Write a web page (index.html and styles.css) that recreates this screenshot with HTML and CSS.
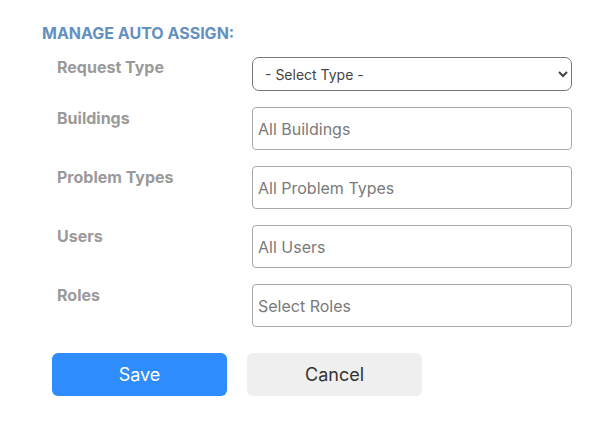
FILE: index.html
```html
<!DOCTYPE html>
<html lang="en">
<head>
  <meta charset="UTF-8" />
  <title>Manage Auto Assign</title>
  <meta name="viewport" content="width=device-width, initial-scale=1.0" />
  <link rel="stylesheet" href="styles.css">
</head>
<body>
  <div class="panel">
    <h3 class="title">MANAGE AUTO ASSIGN:</h3>

    <div class="row row-select">
      <label for="requestType">Request Type</label>
      <select id="requestType" class="field select">
        <option>- Select Type -</option>
      </select>
    </div>

    <div class="row">
      <label for="buildings">Buildings</label>
      <input type="text" id="buildings" class="field" placeholder="All Buildings">
    </div>

    <div class="row">
      <label for="problemTypes">Problem Types</label>
      <input type="text" id="problemTypes" class="field" placeholder="All Problem Types">
    </div>

    <div class="row">
      <label for="users">Users</label>
      <input type="text" id="users" class="field" placeholder="All Users">
    </div>

    <div class="row">
      <label for="roles">Roles</label>
      <input type="text" id="roles" class="field" placeholder="Select Roles">
    </div>

    <div class="actions">
      <button class="btn btn-save">Save</button>
      <button class="btn btn-cancel">Cancel</button>
    </div>
  </div>
</body>
</html>
```

FILE: styles.css
```css
body { margin: 0; background: #fff; font-family: Inter, "Noto Sans", Arial, sans-serif; }
.panel { padding: 24px 0 0 42px; width: 530px; }
.title { margin: 0 0 15px; font-size: 16px; line-height: 18px; font-weight: 700; color: #6490c0; }
.row { display: flex; align-items: flex-start; margin-bottom: 16px; }
.row label { width: 195px; margin-left: 15px; padding-top: 2px; font-size: 16px; line-height: 18px; font-weight: 700; color: #9a9a9a; }
.row-select label { padding-top: 1px; }
.field { box-sizing: border-box; width: 320px; height: 43px; margin: 0; padding: 0 5px; border: 1px solid #a9a9a9; border-radius: 4px; font-family: inherit; font-size: 16px; color: #333; background: #fff; }
.field::placeholder { color: #7a7a7a; }
.select { height: 34px; padding: 0 8px; border-color: #767676; border-radius: 7px; font-size: 14px; color: #444; }
.actions { display: flex; gap: 20px; margin: 26px 0 0 10px; }
.btn { width: 175px; height: 43px; border: none; border-radius: 6px; font-family: inherit; font-size: 18px; cursor: pointer; }
.btn-save { background: #2e8cfd; color: #fff; }
.btn-cancel { background: #efefef; color: #333; }
```
